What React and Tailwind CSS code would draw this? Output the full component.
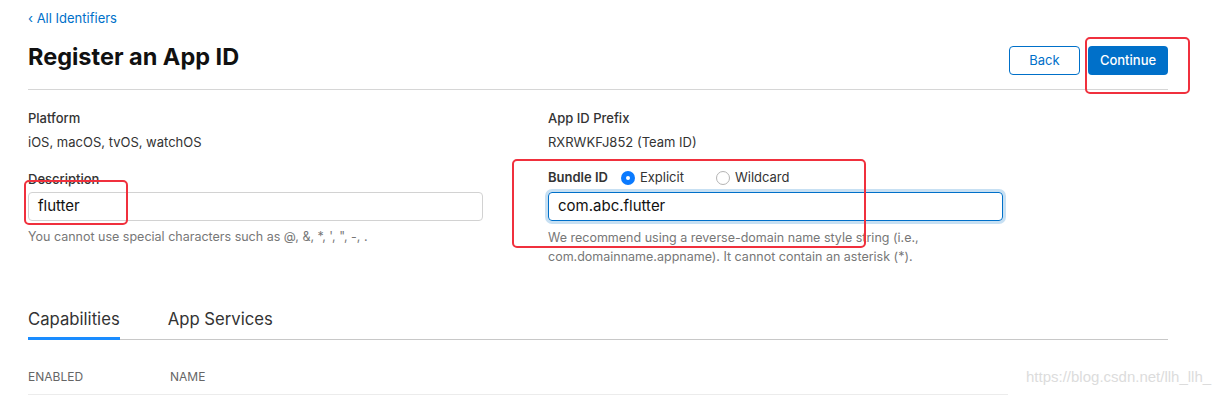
import React from 'react'

const font = { fontFamily: 'Inter, "Noto Sans", sans-serif' }

function Radio({ checked, label }) {
  return (
    <label className="flex items-center gap-[5px] text-[13px] text-[#333]">
      {checked ? (
        <span className="flex h-[14px] w-[14px] items-center justify-center rounded-full bg-[#0a7aff]">
          <span className="h-[4px] w-[4px] rounded-full bg-white" />
        </span>
      ) : (
        <span className="h-[14px] w-[14px] rounded-full border border-[#b4b4b4] bg-white" />
      )}
      {label}
    </label>
  )
}

export default function App() {
  return (
    <div className="relative h-[397px] w-[1229px] overflow-hidden bg-white" style={font}>
      <div className="w-[1168px] pl-[28px]">
        <a className="block pt-[10px] text-[13px] leading-[16px] text-[#0070c9]">
          ‹ All Identifiers
        </a>

        <div className="mt-[17px] flex items-start justify-between border-b border-[#d6d6d6] pb-[14px]">
          <h1 className="text-[23.5px] font-bold leading-[28px] text-[#111]">Register an App ID</h1>
          <div className="mt-[3px] flex gap-[8px]">
            <button className="h-[29px] w-[71px] rounded-[4px] border border-[#0070c9] text-[13px] text-[#0070c9]">
              Back
            </button>
            <button className="h-[29px] w-[80px] rounded-[4px] bg-[#0070c9] text-[13px] font-medium text-white">
              Continue
            </button>
          </div>
        </div>

        <div className="flex">
          <div className="w-[520px]">
            <div className="mt-[20px] text-[13px] font-medium leading-[16px] text-[#333]">Platform</div>
            <div className="mt-[8px] text-[13px] leading-[16px] text-[#333]">iOS, macOS, tvOS, watchOS</div>
            <div className="mt-[21px] text-[13px] font-medium leading-[16px] text-[#333]">Description</div>
            <div className="mt-[5px] flex h-[29px] w-[455px] items-center rounded-[4px] border border-[#d2d2d2] px-[9px] text-[15px] text-[#111]">
              flutter
            </div>
            <div className="mt-[8px] text-[12.5px] leading-[16px] text-[#777]">
              You cannot use special characters such as @, &amp;, *, ', ", -, .
            </div>
          </div>

          <div className="flex-1">
            <div className="mt-[20px] text-[13px] font-medium leading-[16px] text-[#333]">App ID Prefix</div>
            <div className="mt-[8px] text-[13px] leading-[16px] text-[#333]">RXRWKFJ852 (Team ID)</div>
            <div className="mt-[20px] flex h-[16px] items-center">
              <span className="mr-[13px] text-[13px] font-semibold text-[#333]">Bundle ID</span>
              <Radio checked label="Explicit" />
              <span className="w-[32px]" />
              <Radio label="Wildcard" />
            </div>
            <div className="mt-[6px] flex h-[29px] w-[455px] items-center rounded-[4px] border border-[#0070c9] px-[9px] text-[15px] text-[#111] shadow-[0_0_0_3px_rgba(0,112,201,0.22)]">
              com.abc.flutter
            </div>
            <div className="mt-[7px] text-[12.5px] leading-[19px] text-[#777]">
              We recommend using a reverse-domain name style string (i.e.,
              <br />
              com.domainname.appname). It cannot contain an asterisk (*).
            </div>
          </div>
        </div>

        <div className="mt-[41px] flex gap-[48px] border-b border-[#c8c8c8]">
          <div className="-mb-px border-b-[3px] border-[#1a8cff] pb-[5px] text-[16.7px] leading-[24px] text-[#333]">
            Capabilities
          </div>
          <div className="pb-[8px] text-[16.7px] leading-[24px] text-[#333]">App Services</div>
        </div>

        <div className="mt-[29px] flex w-[980px] border-b border-[#ececec] pb-[9px] text-[12px] uppercase leading-[16px] text-[#666]">
          <span className="w-[142px]">Enabled</span>
          <span>Name</span>
        </div>
      </div>

      <div
        className="absolute left-[1026px] top-[368px] text-[15px] leading-[18px] text-[#dcdcdc]"
        style={{ fontFamily: '"Liberation Sans", Arial, sans-serif' }}
      >
        https://blog.csdn.net/llh_llh_
      </div>

      <div className="absolute left-[1085px] top-[37px] h-[57px] w-[105px] rounded-[5px] border-2 border-[#f0303d]" />
      <div className="absolute left-[24px] top-[180px] h-[45px] w-[104px] rounded-[5px] border-2 border-[#f0303d]" />
      <div className="absolute left-[512px] top-[159px] h-[89px] w-[354px] rounded-[5px] border-2 border-[#f0303d]" />
    </div>
  )
}
